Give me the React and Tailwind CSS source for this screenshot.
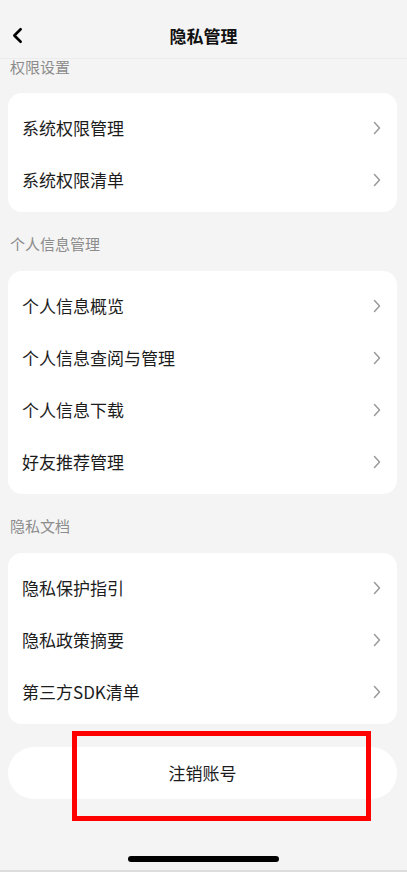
import { ChevronLeft } from "lucide-react";

const sections = [
  { title: "权限设置", items: ["系统权限管理", "系统权限清单"] },
  { title: "个人信息管理", items: ["个人信息概览", "个人信息查阅与管理", "个人信息下载", "好友推荐管理"] },
  { title: "隐私文档", items: ["隐私保护指引", "隐私政策摘要", "第三方SDK清单"] },
];

function Arrow() {
  return (
    <svg width="8" height="14" viewBox="0 0 8 14" fill="none">
      <path d="M1.5 1.5 L6.5 7 L1.5 12.5" stroke="#9a9a9a" strokeWidth="1.5" strokeLinecap="round" strokeLinejoin="round" />
    </svg>
  );
}

function Row({ label }) {
  return (
    <div className="h-[52px] flex items-center justify-between pl-[14px] pr-[16px]">
      <span className="text-[17px] text-[#1c1c1c]">{label}</span>
      <Arrow />
    </div>
  );
}

export default function App() {
  return (
    <div
      className="relative w-[407px] h-[872px] bg-[#f4f4f4] flex flex-col overflow-hidden"
      style={{ fontFamily: '"Noto Sans CJK SC", "Noto Sans", sans-serif' }}
    >
      <div className="relative h-[59px] shrink-0 flex items-center justify-center pt-[13px] border-b border-[#ebebeb]">
        <ChevronLeft className="absolute left-[5px] top-[23px] text-black" size={25} strokeWidth={2.5} />
        <span className="text-[17px] font-bold text-[#111]">隐私管理</span>
      </div>

      {sections.map((s, i) => (
        <div key={s.title}>
          <div
            className={`pl-[10px] text-[15px] leading-[16px] text-[#8c8c8c] ${
              i === 0 ? "pt-0 pb-[18px]" : "pt-[24px] pb-[19px]"
            }`}
          >
            {s.title}
          </div>
          <div className="ml-[8px] mr-[10px] bg-white rounded-[14px] pt-[9px] pb-[6px]">
            {s.items.map((it) => (
              <Row key={it} label={it} />
            ))}
          </div>
        </div>
      ))}

      <div className="ml-[8px] mr-[10px] mt-[23px] h-[52px] bg-white rounded-full flex items-center justify-center">
        <span className="text-[17px] text-[#1c1c1c]">注销账号</span>
      </div>

      <div className="flex-1" />
      <div className="flex justify-center pb-[8px]">
        <div className="w-[151px] h-[6px] rounded-full bg-black" />
      </div>
      <div className="h-[2px] bg-[#dcdcdc]" />

      <div className="absolute left-[72px] top-[731px] w-[299px] h-[90px] border-[5px] border-[#ff0000]" />
    </div>
  );
}
